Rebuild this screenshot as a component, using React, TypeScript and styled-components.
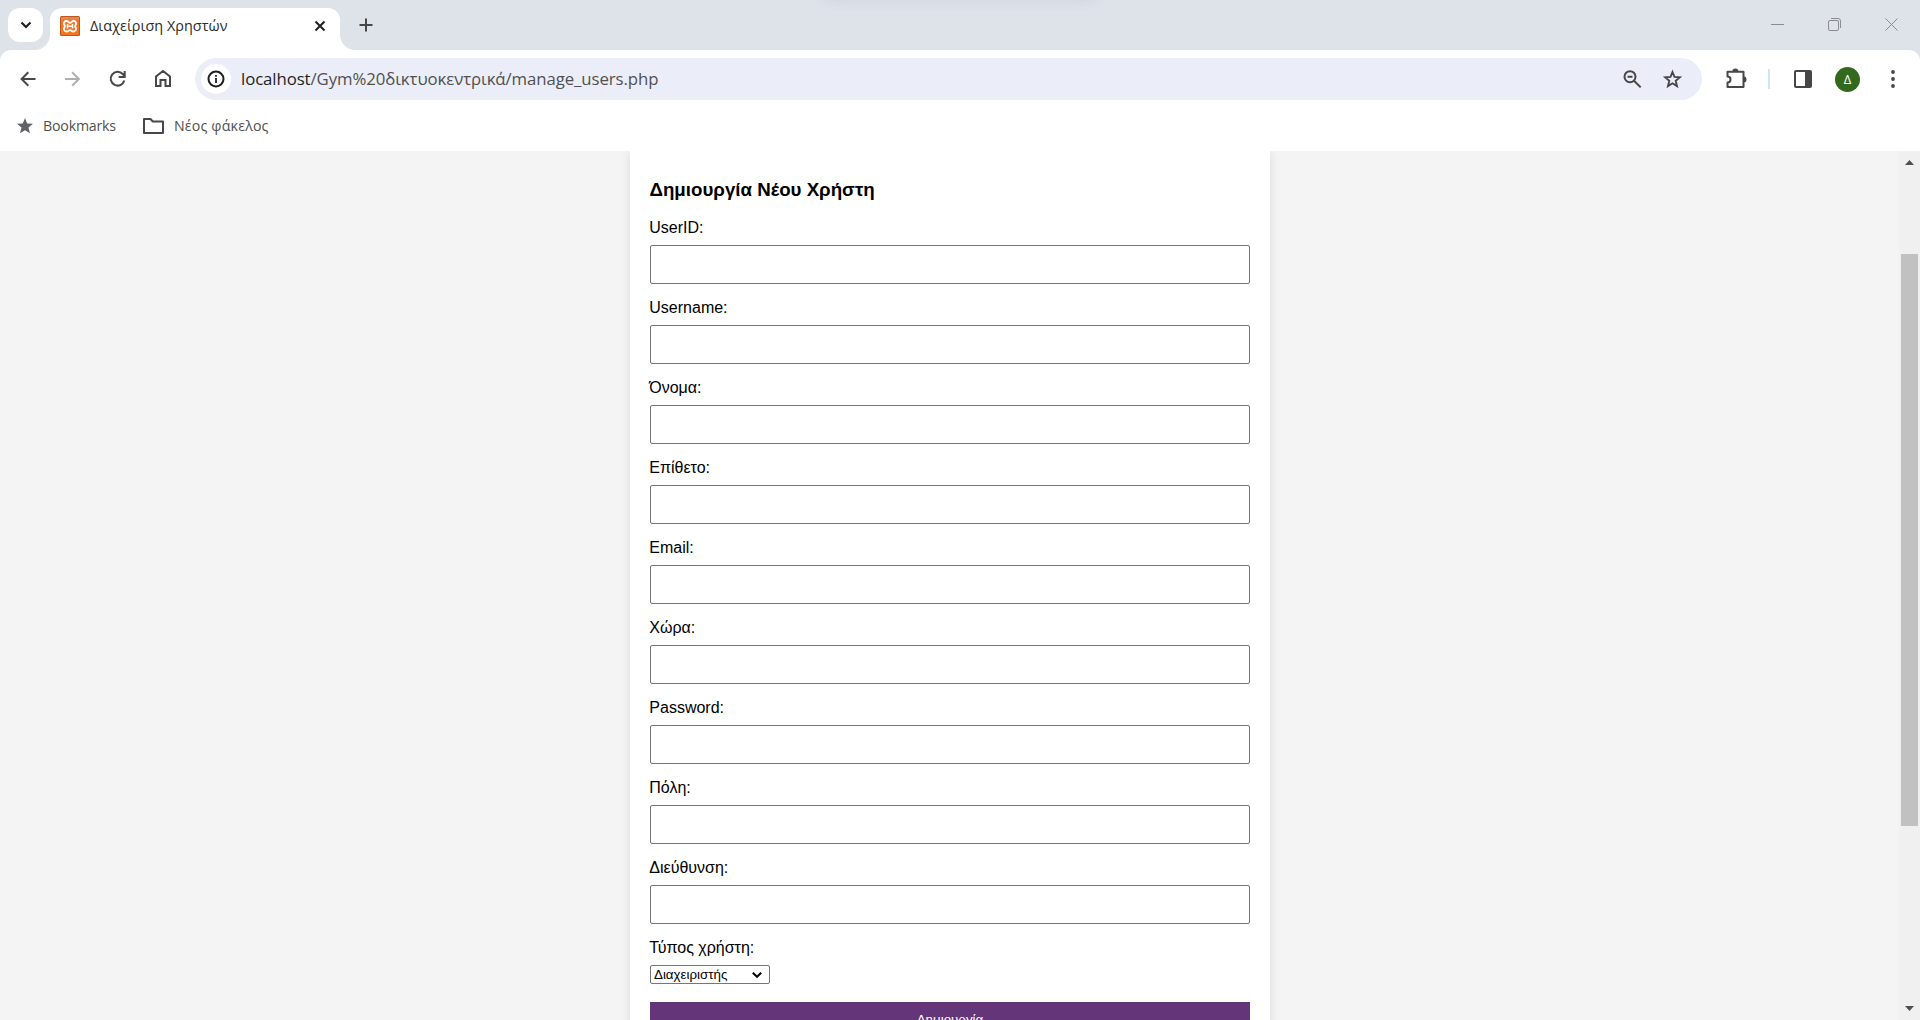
import React from "react";
import styled, { createGlobalStyle } from "styled-components";

const Global = createGlobalStyle`
  *, *::before, *::after { box-sizing: border-box; }
  html, body, #root { height: 100%; }
  body { margin: 0; overflow: hidden; font-family: "Liberation Sans", Arial, sans-serif; }
`;

const UI_FONT = `"Open Sans", "Noto Sans", sans-serif`;

const Browser = styled.div`
  display: flex;
  flex-direction: column;
  width: 1920px;
  height: 1020px;
  overflow: hidden;
  background: #dee2e9;
  font-family: ${UI_FONT};
`;

const TabStrip = styled.div`
  position: relative;
  display: flex;
  align-items: flex-start;
  flex: none;
  height: 50px;
  padding: 8px 21px 0 8px;
  background: #dee2e9;
`;

const TopShade = styled.div`
  position: absolute;
  top: -12px;
  left: 826px;
  width: 268px;
  height: 10px;
  box-shadow: 0 0 14px rgba(90, 100, 130, 0.16);
`;

const TabSearch = styled.div`
  display: flex;
  align-items: center;
  justify-content: center;
  width: 35px;
  height: 34px;
  border-radius: 12px;
  background: #fff;
`;

const Tab = styled.div`
  position: relative;
  display: flex;
  align-items: center;
  width: 290px;
  height: 42px;
  margin-left: 7px;
  padding: 0 13px 7px 10px;
  border-radius: 12px 12px 0 0;
  background: #fff;
  &::before, &::after {
    content: "";
    position: absolute;
    bottom: 0;
    width: 15px;
    height: 15px;
  }
  &::before { left: -15px; background: radial-gradient(circle at 0 0, transparent 14.5px, #fff 15.2px); }
  &::after { right: -15px; background: radial-gradient(circle at 100% 0, transparent 14.5px, #fff 15.2px); }
`;

const TabTitle = styled.span`
  flex: 1;
  margin-left: 10px;
  font-size: 14.4px;
  letter-spacing: 0.04px;
  line-height: 20px;
  color: #2a2a2a;
  white-space: nowrap;
`;

const NewTab = styled.div`
  display: flex;
  margin: 8px 0 0 17px;
`;

const WindowControls = styled.div`
  display: flex;
  gap: 43px;
  margin: 10px 0 0 auto;
`;

const Toolbar = styled.div`
  display: flex;
  align-items: center;
  flex: none;
  height: 58px;
  margin-bottom: -7px;
  padding: 0 5px 0 5px;
  border-radius: 11px 11px 0 0;
  background: #fff;
`;

const ToolCell = styled.div<{ $w?: number }>`
  display: flex;
  align-items: center;
  justify-content: center;
  flex: none;
  width: ${(p) => p.$w ?? 45}px;
  height: 42px;
`;

const Omnibox = styled.div`
  display: flex;
  align-items: center;
  width: 1507px;
  height: 42px;
  margin: 0 11px 0 10px;
  padding: 0 10px 0 6px;
  border-radius: 21px;
  background: #ebeef8;
`;

const InfoBadge = styled.div`
  display: flex;
  align-items: center;
  justify-content: center;
  width: 30px;
  height: 30px;
  border-radius: 50%;
  background: #fff;
`;

const Url = styled.div`
  flex: 1;
  margin-left: 10px;
  font-size: 16.8px;
  letter-spacing: -0.09px;
  line-height: 24px;
  color: #505050;
  white-space: nowrap;
  b { font-weight: 400; color: #1f1f1f; }
`;

const Divider = styled.div`
  width: 2px;
  height: 20px;
  background: #d3e3fd;
`;

const Avatar = styled.div`
  width: 25px;
  height: 25px;
  border-radius: 50%;
  background: #33691e;
  color: #fff;
  font-size: 13px;
  line-height: 25px;
  text-align: center;
`;

const Bookmarks = styled.div`
  display: flex;
  align-items: center;
  flex: none;
  height: 50px;
  padding: 0 0 0 17px;
  background: #fff;
`;

const Bookmark = styled.div<{ $spacing: number }>`
  display: flex;
  align-items: center;
  gap: 10px;
  margin-right: 27px;
  font-size: 14.2px;
  letter-spacing: ${(p) => p.$spacing}px;
  line-height: 20px;
  color: #505050;
  white-space: nowrap;
`;

const Viewport = styled.div`
  display: flex;
  flex: 1;
  min-height: 0;
  background: #f4f4f4;
  font-family: "Liberation Sans", Arial, sans-serif;
`;

const PageArea = styled.main`
  flex: 1;
  display: flex;
  justify-content: center;
  overflow: hidden;
`;

const Card = styled.form`
  width: 640px;
  height: 940px;
  margin-left: 1px;
  padding: 28px 20px 0;
  background: #fff;
  box-shadow: 0 0 10px rgba(0, 0, 0, 0.1);
`;

const Heading = styled.h3`
  margin: 0 0 19px;
  font-size: 18.72px;
  line-height: 21px;
  font-weight: 700;
  text-indent: -0.5px;
  color: #000;
`;

const Label = styled.label`
  display: block;
  margin-bottom: 8px;
  font-size: 16px;
  line-height: 18px;
  text-indent: -0.7px;
  color: #000;
`;

const Input = styled.input`
  display: block;
  width: 100%;
  height: 39px;
  margin: 0 0 15px;
  padding: 10px;
  border: 1px solid #767676;
  border-radius: 2px;
  background: #fff;
`;

const Select = styled.div`
  display: flex;
  align-items: center;
  justify-content: space-between;
  width: 120px;
  height: 19px;
  margin-bottom: 18px;
  padding: 0 7px 0 3px;
  border: 1px solid #767676;
  border-radius: 2px;
  font-size: 13.333px;
  line-height: 17px;
  color: #000;
`;

const Submit = styled.button`
  display: block;
  width: 100%;
  height: 35px;
  padding: 10px;
  border: 0;
  background: #643579;
  color: #fff;
  font-family: inherit;
  font-size: 13.333px;
  line-height: 15px;
`;

const ScrollTrack = styled.div`
  display: flex;
  flex-direction: column;
  align-items: center;
  width: 21px;
  padding: 9px 0;
  background: #f0f0f0;
`;

const Thumb = styled.div`
  width: 17px;
  height: 572px;
  margin: 89px 0 auto;
  background: #c1c1c1;
`;

const Favicon = () => (
  <svg width="20" height="20" viewBox="0 0 20 20">
    <rect width="20" height="20" rx="1.5" fill="#c0561a" />
    <rect x="1" y="1" width="18" height="18" rx="1" fill="#f47521" />
    <rect x="1" y="1" width="18" height="2.5" fill="#dc8a55" />
    <path
      d="M6.500 5C4.500 5 3.700 6.500 4 8c.2 1 .9 1.500.9 2.200S4.200 11.400 4 12.300c-.3 1.700.8 3.200 2.600 3.200 1.700 0 2.200-1.300 3.400-1.300s1.700 1.300 3.400 1.300c1.800 0 2.900-1.500 2.600-3.200-.2-.9-.9-1.400-.9-2.100s.7-1.200.9-2.200c.3-1.500-.5-3-2.500-3S11.800 6.800 10 6.800 8.500 5 6.500 5z"
      fill="none"
      stroke="#fff"
      strokeWidth="1.800"
    />
    <path d="M7.500 8v4.500M12.500 8v4.500M7.500 10.200h5" stroke="#fff" strokeWidth="1.500" fill="none" />
  </svg>
);

type StrokeProps = { size: number; d: string; w?: number; color?: string };

const Stroke = ({ size, d, w = 2, color = "#474747" }: StrokeProps) => (
  <svg width={size} height={size} viewBox={`0 0 ${size} ${size}`} fill="none" stroke={color} strokeWidth={w}>
    <path d={d} />
  </svg>
);

const fields = ["UserID:", "Username:", "Όνομα:", "Επίθετο:", "Email:", "Χώρα:", "Password:", "Πόλη:", "Διεύθυνση:"];

export default function App() {
  return (
    <>
      <Global />
      <Browser>
        <TabStrip>
          <TopShade />
          <TabSearch>
            <Stroke size={12} d="M1.500 3.500L6 8l4.500-4.500" w={2.2} color="#1f1f1f" />
          </TabSearch>
          <Tab>
            <Favicon />
            <TabTitle>Διαχείριση Χρηστών</TabTitle>
            <Stroke size={14} d="M2.500 2.500l9 9M11.500 2.500l-9 9" w={2} color="#1f1f1f" />
          </Tab>
          <NewTab>
            <Stroke size={18} d="M9 2.500v13M2.500 9h13" />
          </NewTab>
          <WindowControls>
            <Stroke size={14} d="M0 6.500h13" w={1} color="#8a8c90" />
            <svg width="14" height="14" viewBox="0 0 14 14" fill="none" stroke="#8a8c90">
              <rect x="0.500" y="2.500" width="10" height="10" rx="1.500" />
              <path d="M3 .5h7a2.500 2.500 0 0 1 2.500 2.500v7" />
            </svg>
            <Stroke size={14} d="M.5 .5l12 12M12.500 .5l-12 12" w={1} color="#8a8c90" />
          </WindowControls>
        </TabStrip>

        <Toolbar>
          <ToolCell><Stroke size={20} d="M17.500 10H4M10.300 3.300L3.600 10l6.700 6.700" /></ToolCell>
          <ToolCell><Stroke size={20} d="M2 10H15.500M9.200 3.300L15.900 10l-6.700 6.700" color="#b0b0b0" /></ToolCell>
          <ToolCell><Stroke size={20} d="M16.300 11.500A6.900 6.900 0 1 1 14.700 5L16.700 7M16.700 2v6h-6" /></ToolCell>
          <ToolCell><Stroke size={20} d="M3 17V7.500L10 2l7 5.500V17h-4.500v-6h-5v6z" /></ToolCell>
          <Omnibox>
            <InfoBadge>
              <svg width="18" height="18" viewBox="0 0 18 18">
                <circle cx="9" cy="9" r="7.500" fill="none" stroke="#1f1f1f" strokeWidth="2" />
                <path d="M8.100 8h1.800v5H8.100zM8.100 5h1.800v1.800H8.100z" fill="#1f1f1f" />
              </svg>
            </InfoBadge>
            <Url><b>localhost</b>/Gym%20δικτυοκεντρικά/manage_users.php</Url>
            <ToolCell $w={40}>
              <Stroke size={20} d="M8 2.200a5.500 5.500 0 1 1 0 11a5.500 5.500 0 0 1 0-11zM12 11.700l6.700 6.700M5.500 7.700h5" />
            </ToolCell>
            <ToolCell $w={40}>
              <svg width="20" height="20" viewBox="0 0 20 20" fill="none" stroke="#474747" strokeWidth="1.900">
                <path d="M10.500 3l2 4.900 5.300.4-4.100 3.500 1.300 5.300-4.500-2.800L6 17.100l1.300-5.300-4.100-3.500 5.300-.4z" />
              </svg>
            </ToolCell>
          </Omnibox>
          <ToolCell>
            <svg width="22" height="22" viewBox="0 0 22 22">
              <path d="M2.500 3.800H18.500V19H2.500V14.500a3 3 0 0 0 0-6z" fill="none" stroke="#474747" strokeWidth="2" strokeLinejoin="round" />
              <path d="M7.500 3a2.900 2.500 0 0 1 5.800 0zM19 8.500a2.500 2.900 0 0 1 0 5.800z" fill="#474747" />
            </svg>
          </ToolCell>
          <ToolCell $w={22}><Divider /></ToolCell>
          <ToolCell>
            <svg width="18" height="18" viewBox="0 0 18 18">
              <rect x="1" y="1" width="16" height="16" rx="1" fill="none" stroke="#474747" strokeWidth="2" />
              <path d="M11 1h6v16h-6z" fill="#474747" />
            </svg>
          </ToolCell>
          <ToolCell><Avatar>Δ</Avatar></ToolCell>
          <ToolCell>
            <svg width="4" height="20" viewBox="0 0 4 20" fill="#474747">
              <circle cx="2" cy="3" r="1.900" />
              <circle cx="2" cy="10" r="1.900" />
              <circle cx="2" cy="17" r="1.900" />
            </svg>
          </ToolCell>
        </Toolbar>

        <Bookmarks>
          <Bookmark $spacing={-0.2}>
            <svg width="16" height="16" viewBox="0 0 16 16" fill="#5f6368">
              <path d="M8 0l2.200 5.400 5.800.4-4.500 3.700L13 15.300 8 12.200l-5 3.100 1.500-5.800L0 5.800l5.800-.4z" />
            </svg>
            Bookmarks
          </Bookmark>
          <Bookmark $spacing={0.18}>
            <svg width="21" height="16" viewBox="0 0 21 16" fill="none" stroke="#474747" strokeWidth="2" strokeLinejoin="round">
              <path d="M1 1h6.500l2.300 2.500H20V15H1z" />
            </svg>
            Νέος φάκελος
          </Bookmark>
        </Bookmarks>

        <Viewport>
          <PageArea>
            <Card>
              <Heading>Δημιουργία Νέου Χρήστη</Heading>
              {fields.map((f) => (
                <React.Fragment key={f}>
                  <Label>{f}</Label>
                  <Input />
                </React.Fragment>
              ))}
              <Label>Τύπος χρήστη:</Label>
              <Select>
                Διαχειριστής
                <Stroke size={10} d="M.8 2.800L5 6.800l4.200-4" w={2} color="#000" />
              </Select>
              <Submit type="button">Δημιουργία</Submit>
            </Card>
          </PageArea>
          <ScrollTrack>
            <svg width="9" height="5" viewBox="0 0 9 5"><path d="M0 5l4.500-5L9 5z" fill="#505050" /></svg>
            <Thumb />
            <svg width="9" height="5" viewBox="0 0 9 5"><path d="M0 0l4.500 5L9 0z" fill="#505050" /></svg>
          </ScrollTrack>
        </Viewport>
      </Browser>
    </>
  );
}
